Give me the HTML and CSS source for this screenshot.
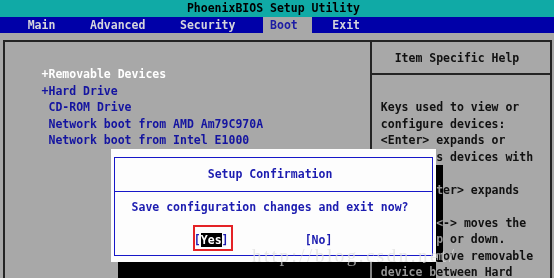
FILE: index.html
```html
<!DOCTYPE html>
<html>
  <head>
    <meta charset="UTF-8">
    <title>PhoenixBIOS Setup Utility</title>
    <link rel="stylesheet" href="styles.css">
  </head>
  <body>
    <div class="screen">
      <div class="titlebar">PhoenixBIOS Setup Utility</div>
      <div class="menubar">    Main     Advanced     Security    <span class="menu-active"> Boot  </span>   Exit</div>

      <div class="frame">
        <div class="panel list">
          <div class="row row-hot">+Removable Devices</div>
          <div class="row">+Hard Drive</div>
          <div class="row"> CD-ROM Drive</div>
          <div class="row"> Network boot from AMD Am79C970A</div>
          <div class="row"> Network boot from Intel E1000</div>
        </div>
        <div class="panel help">
          <div class="help-head">Item Specific Help</div>
          <div class="help-text">
            <div class="row">Keys used to view or</div>
            <div class="row">configure devices:</div>
            <div class="row">&lt;Enter&gt; expands or</div>
            <div class="row">collapses devices with</div>
            <div class="row">a + or -</div>
            <div class="row">&lt;Ctrl+Enter&gt; expands</div>
            <div class="row">all</div>
            <div class="row">&lt;+&gt; and &lt;-&gt; moves the</div>
            <div class="row">device up or down.</div>
            <div class="row">&lt;n&gt; May move removable</div>
            <div class="row">device between Hard</div>
          </div>
        </div>
      </div>

      <!-- confirmation popup sits over the boot page -->
      <div class="dialog">
        <div class="dialog-box">
          <div class="dialog-title">Setup Confirmation</div>
          <div class="dialog-body">
            <div class="row msg">Save configuration changes and exit now?</div>
            <div class="row"></div>
            <div class="row buttons"><span class="mark">[<span class="sel">Yes</span>]</span><span class="btn-no">[No]</span></div>
          </div>
        </div>
      </div>
      <div class="shadow shadow-right"></div>
      <div class="shadow shadow-bottom"></div>

      <div class="watermark">http://blog.csdn.net/</div>
    </div>
  </body>
</html>
```

FILE: styles.css
```css
html, body { margin: 0; padding: 0; }
body { background: #a8a8a8; }
.screen {
  position: relative;
  width: 554px;
  height: 278px;
  overflow: hidden;
  background: #a8a8a8;
  font-family: 'DejaVu Sans Mono', monospace;
  font-weight: bold;
  font-size: 11.5px;
  line-height: 16.5px;
}
.row, .titlebar, .menubar, .help-head, .dialog-title { white-space: pre; }
.row { height: 16.5px; }

.titlebar {
  height: 16.5px;
  background: #10aaa6;
  color: #000;
  padding-left: 27ch;
}
.menubar {
  height: 16.5px;
  background: #0000a8;
  color: #d4d4dc;
}
.menu-active {
  display: inline-block;
  background: #a8a8a8;
  color: #1c1ca4;
}

.frame {
  display: flex;
  height: 250px;
  margin: 7.25px 2.5px 0 2.5px;
  border: 2px solid #242424;
  border-bottom: none;
}
.panel { box-sizing: border-box; }
.list {
  width: 367px;
  border-right: 2px solid #242424;
  padding-top: 23.75px;
  padding-left: calc(6ch - 4.5px);
  color: #1414a0;
}
.row-hot { color: #fff; }
.help { flex: 1; color: #111; }
.help-head {
  height: 16.5px;
  padding: 7.25px 0 7.25px calc(57ch - 371.5px);
  border-bottom: 2px solid #242424;
}
.help-text {
  padding-top: 23.75px;
  padding-left: calc(55ch - 371.5px);
}

.dialog {
  position: absolute;
  left: 111px;
  top: 149px;
  width: 325px;
  height: 113px;
  box-sizing: border-box;
  padding: 8px 3px 6px 3px;
  background: #fdfdfd;
  color: #1c1cb0;
}
.dialog-box {
  height: 100%;
  box-sizing: border-box;
  border: 1px solid #1818c8;
}
.dialog-title {
  height: 33px;
  line-height: 33px;
  border-bottom: 1px solid #1818c8;
  padding-left: calc(30ch - 115px);
}
.dialog-body { padding-top: 7px; }
.msg { padding-left: calc(19ch - 115px); }
.buttons { padding-left: calc(28ch - 115px); }
.mark { position: relative; }
.mark::after {
  content: "";
  position: absolute;
  left: -1px;
  right: -4.5px;
  top: -8px;
  bottom: -3.5px;
  border: 2px solid #e42226;
}
.sel { background: #000; color: #fff; }
.btn-no { margin-left: 11ch; }

.shadow {
  position: absolute;
  background: #a8a8a8;
  mix-blend-mode: difference;
}
.shadow-right { left: 436px; top: 165px; width: 7px; height: 113px; }
.shadow-bottom { left: 118px; top: 262px; width: 325px; height: 16px; }

.watermark {
  position: absolute;
  left: 252px;
  top: 246px;
  font-family: 'Liberation Serif', serif;
  font-weight: normal;
  font-size: 19px;
  line-height: 20px;
  letter-spacing: 2.5px;
  color: rgba(222, 222, 222, 0.7);
}
```
